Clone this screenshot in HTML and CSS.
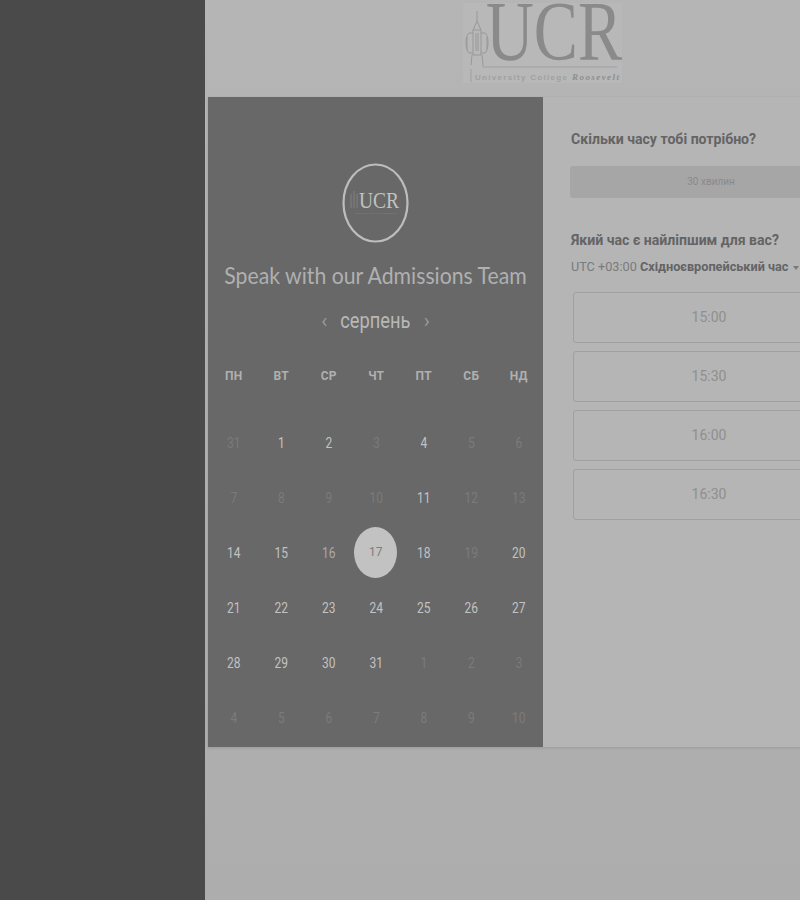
FILE: index.html
```html
<!DOCTYPE html>
<html lang="uk">
<head>
<meta charset="utf-8">
<title>UCR</title>
<link rel="stylesheet" href="styles.css">
</head>
<body>
<div class="app">
  <aside class="sidebar"></aside>
  <main class="main">
    <header class="header">
      <svg class="logo" width="159" height="80" viewBox="0 0 159 80">
        <rect width="159" height="80" fill="#b8b8b8"/>
        <g fill="none" stroke="#989898" stroke-width="1">
          <path d="M14 8V18M14 18L10 27V52M14 18L18 27V52M10 27H18M6 30H10M18 30H22M6 30C2 32 2 47 6 50H10M22 30C26 32 26 47 22 50H18M10 52H18M9 52L8 62M19 52L20 62"/>
          <path d="M4 34V46M24 34V46M13 30V48M15 30V48"/>
          <path d="M8 66V79M20 62V64H154" stroke="#a0a0a0"/>
        </g>
        <text class="logo-ucr" x="23" y="57" textLength="136" lengthAdjust="spacingAndGlyphs">UCR</text>
        <text class="logo-sub" x="12" y="77" textLength="92" lengthAdjust="spacing">University College</text>
        <text class="logo-script" x="109" y="77" textLength="47" lengthAdjust="spacing">Roosevelt</text>
      </svg>
    </header>
    <section class="card">
      <div class="panel">
        <div class="badge">
          <svg width="67" height="80" viewBox="0 0 67 80">
            <ellipse cx="33.5" cy="40" rx="32" ry="38.5" fill="none" stroke="#bdbdbd" stroke-width="2.2"/>
            <path d="M9 31V45M12 28V45M15 31V45" fill="none" stroke="#7d7d7d" stroke-width="1.200"/>
            <text class="badge-ucr" x="17" y="45" textLength="40" lengthAdjust="spacingAndGlyphs">UCR</text>
            <text class="badge-sub" x="13" y="51" textLength="42" lengthAdjust="spacing">University College Roosevelt</text>
          </svg>
        </div>
        <h1 class="title">Speak with our Admissions Team</h1>
        <div class="month">
          <span class="chev">‹</span>
          <span class="month-name">серпень</span>
          <span class="chev">›</span>
        </div>
        <div class="weekdays">
          <span>ПН</span><span>ВТ</span><span>СР</span><span>ЧТ</span><span>ПТ</span><span>СБ</span><span>НД</span>
        </div>
        <div class="days">
          <span class="off">31</span><span class="on">1</span><span class="on">2</span><span class="off">3</span><span class="on">4</span><span class="off">5</span><span class="off">6</span>
          <span class="off">7</span><span class="off">8</span><span class="off">9</span><span class="off">10</span><span class="on">11</span><span class="off">12</span><span class="off">13</span>
          <span class="on">14</span><span class="on">15</span><span class="on dim">16</span><span class="sel"><i>17</i></span><span class="on">18</span><span class="off">19</span><span class="on">20</span>
          <span class="on">21</span><span class="on">22</span><span class="on">23</span><span class="on">24</span><span class="on">25</span><span class="on">26</span><span class="on">27</span>
          <span class="on">28</span><span class="on">29</span><span class="on">30</span><span class="on">31</span><span class="off">1</span><span class="off">2</span><span class="off">3</span>
          <span class="off">4</span><span class="off">5</span><span class="off">6</span><span class="off">7</span><span class="off">8</span><span class="off">9</span><span class="off">10</span>
        </div>
      </div>
      <div class="details">
        <h2 class="question">Скільки часу тобі потрібно?</h2>
        <div class="duration">30 хвилин</div>
        <h2 class="question second">Який час є найліпшим для вас?</h2>
        <div class="zone"><span class="utc">UTC +03:00</span> <b>Східноєвропейський час</b> <span class="caret"></span></div>
        <div class="slots">
          <div class="slot">15:00</div>
          <div class="slot">15:30</div>
          <div class="slot">16:00</div>
          <div class="slot">16:30</div>
        </div>
      </div>
    </section>
  </main>
</div>
</body>
</html>
```
FILE: styles.css
```css
* { box-sizing: border-box; }
html, body { margin: 0; height: 100%; overflow: hidden; }
body { font-family: Roboto, "Liberation Sans", sans-serif; background: #b0b0b0; }
.app { display: flex; height: 900px; width: 800px; overflow: hidden; }
.sidebar { flex: none; width: 205px; background: #4a4a4a; }
.main { flex: none; width: 595px; overflow: hidden; background: linear-gradient(#b5b5b5, #adadad); }
.header { height: 97px; padding: 3px 0 0 258px; }
.logo { display: block; }
.logo-ucr { font: 85px "Liberation Serif", serif; fill: #8a8a8a; }
.logo-sub { font: bold 8px "Liberation Sans", sans-serif; fill: #a0a0a0; }
.logo-script { font: italic bold 9px "Liberation Serif", serif; fill: #8e8e8e; }
.card { display: flex; width: 660px; height: 650px; margin-left: 3px; box-shadow: 0 1px 3px rgba(0,0,0,.12); }
.panel { flex: none; width: 335px; background: #686868; color: #bdbdbd; }
.badge { display: flex; justify-content: center; padding-top: 66px; padding-right: 1px; }
.badge svg { display: block; }
.badge-ucr { font: 23px "Liberation Serif", serif; fill: #c2c2c2; }
.badge-sub { font: 2.5px "Liberation Sans", sans-serif; fill: #8c8c8c; }
.title { display: flex; justify-content: center; margin: 17px 0 0; font: 400 24px/30px Lato, sans-serif; color: #b0b0b0; white-space: nowrap; transform: scaleX(.885); }
.month { display: flex; justify-content: center; align-items: center; gap: 12px; height: 30px; margin-top: 16px; }
.month-name { font-size: 22px; line-height: 30px; color: #b8b8b8; transform: scaleX(.83); margin: 0 -6px; }
.chev { font-size: 20px; line-height: 26px; color: #9a9a9a; }
.weekdays, .days { display: grid; grid-template-columns: repeat(7, 47.5px); padding-left: 2px; text-align: center; }
.weekdays { margin-top: 25px; height: 30px; line-height: 30px; font-size: 12px; font-weight: 700; color: #b0b0b0; letter-spacing: .3px; }
.days { margin-top: 25px; grid-auto-rows: 55px; font-size: 12px; line-height: 55px; }
.on, .off { transform: scaleY(1.2); }
.on { color: #c2c2c2; }
.dim { color: #a8a8a8; }
.off { color: #7b7b7b; }
.sel { display: flex; align-items: center; justify-content: center; }
.sel i { display: block; width: 43px; height: 51px; margin: 0 1px 3px 0; border-radius: 50%; background: #c2c2c2; color: #7e7e7e; font-style: normal; line-height: 51px; }
.details { flex: none; width: 325px; padding: 31px 0 0 28px; background: #b5b5b5; }
.question { margin: 0; font-size: 14.1px; line-height: 20px; font-weight: 700; color: #646464; white-space: nowrap; transform: scaleY(1.1); transform-origin: left center; }
.duration { width: 282px; height: 32px; margin: 18px 0 0 -1px; border-radius: 3px; background: #a6a6a6; color: #8a8a8a; font-size: 10px; line-height: 32px; text-align: center; }
.second { margin-top: 31px; }
.zone { margin-top: 8px; font-size: 12.7px; line-height: 20px; color: #7a7a7a; white-space: nowrap; }
.zone b { color: #646464; font-weight: 700; }
.caret { display: inline-block; margin-left: 1px; vertical-align: middle; border: 3px solid transparent; border-top: 4px solid #7a7a7a; border-bottom: 0; }
.slots { display: flex; flex-direction: column; gap: 8px; margin: 15px 0 0 2px; width: 272px; }
.slot { height: 51px; border: 1px solid #a0a0a0; border-radius: 3px; color: #8f8f8f; font-size: 14px; line-height: 49px; text-align: center; }
```
